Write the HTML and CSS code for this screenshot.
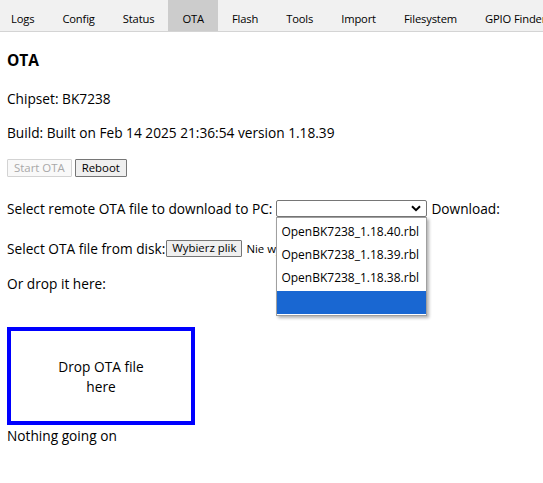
FILE: index.html
```html
<!DOCTYPE html>
<html lang="en">
<head>
<meta charset="utf-8">
<title>OTA</title>
<link rel="stylesheet" href="styles.css">
</head>
<body>
<nav class="tabs">
  <button class="tab">Logs</button>
  <button class="tab">Config</button>
  <button class="tab">Status</button>
  <button class="tab active">OTA</button>
  <button class="tab">Flash</button>
  <button class="tab">Tools</button>
  <button class="tab">Import</button>
  <button class="tab">Filesystem</button>
  <button class="tab">GPIO Finder</button>
</nav>
<main class="page">
  <h2 class="title">OTA</h2>
  <p class="line chipset">Chipset: BK7238</p>
  <p class="line build">Build: Built on Feb 14 2025 21:36:54 version 1.18.39</p>
  <div class="row actions">
    <button class="btn" disabled>Start OTA</button>
    <button class="btn">Reboot</button>
  </div>
  <div class="row remote">
    <span>Select remote OTA file to download to PC:</span>
    <span class="select-wrap">
      <span class="select">
        <svg class="chevron" width="10" height="7" viewBox="0 0 10 7"><polyline points="1,1.2 5,5.2 9,1.2" fill="none" stroke="#000" stroke-width="2"/></svg>
      </span>
      <span class="popup">
        <span class="option">OpenBK7238_1.18.40.rbl</span>
        <span class="option">OpenBK7238_1.18.39.rbl</span>
        <span class="option">OpenBK7238_1.18.38.rbl</span>
        <span class="option selected"></span>
      </span>
    </span>
    <span>Download:</span>
  </div>
  <div class="row disk">
    <span>Select OTA file from disk:</span><span class="btn file-btn">Wybierz plik</span><span class="file-name">Nie wybrano pliku</span>
  </div>
  <p class="line drop-label">Or drop it here:</p>
  <div class="drop">Drop OTA file<br>here</div>
  <p class="line status">Nothing going on</p>
</main>
</body>
</html>
```
FILE: styles.css
```css
html, body {
  margin: 0;
  padding: 0;
  background: #fff;
}
body {
  font-family: "Open Sans", "Noto Sans", sans-serif;
  font-size: 13.7px;
  color: #000;
}
.tabs {
  display: flex;
  background: #f1f1f1;
  border-bottom: 1px solid #d4d4d4;
  height: 31px;
  white-space: nowrap;
  overflow: hidden;
}
.tab {
  flex: none;
  border: 0;
  background: transparent;
  font-family: inherit;
  font-size: 11.2px;
  letter-spacing: -0.15px;
  color: #000;
  padding: 6px 14px 0;
  line-height: 25px;
  height: 31px;
  margin: 0;
}
.tab:first-child {
  padding-left: 11px;
}
.tab.active {
  background: #cccccc;
}
.page {
  padding: 0 7px;
}
.title {
  font-size: 15.5px;
  font-weight: bold;
  line-height: 20px;
  margin: 18px 0 0;
}
.line {
  margin: 0;
  line-height: 18px;
}
.chipset { margin-top: 20px; }
.build { margin-top: 16px; }
.row {
  display: flex;
  align-items: center;
  height: 18px;
  white-space: nowrap;
}
.actions {
  margin-top: 17px;
  gap: 3px;
}
.btn {
  font-family: inherit;
  font-size: 11.4px;
  line-height: 16px;
  height: 18px;
  box-sizing: border-box;
  padding: 0 6px;
  margin: 0;
  background: #efefef;
  border: 1px solid #767676;
  border-radius: 1px;
  color: #000;
}
.btn:disabled {
  background: #f9f9f9;
  border-color: #d3d3d3;
  color: #a8a8a8;
}
.remote {
  margin-top: 22px;
  gap: 4px;
}
.select-wrap {
  position: relative;
  display: block;
  width: 151px;
  height: 17px;
  margin-top: 1px;
}
.select {
  display: flex;
  justify-content: flex-end;
  align-items: center;
  box-sizing: border-box;
  width: 151px;
  height: 17px;
  border: 1px solid #767676;
  border-radius: 2px;
  background: #fff;
  padding-right: 5px;
}
.chevron {
  display: block;
}
.popup {
  position: absolute;
  left: 0;
  top: 17px;
  width: 151px;
  box-sizing: border-box;
  background: #fff;
  border: 1px solid #a0a0a0;
  padding: 4px 0 1px;
  box-shadow: 2px 2px 3px rgba(0, 0, 0, 0.3);
  z-index: 2;
}
.option {
  display: block;
  height: 23px;
  line-height: 19px;
  padding: 0 4px;
  font-size: 12px;
}
.option.selected {
  background: #1967d2;
}
.disk {
  margin-top: 22px;
}
.file-btn {
  display: inline-flex;
  align-items: center;
  height: 17px;
  margin-left: 1px;
  padding: 0 5px;
}
.file-name {
  margin-left: 4px;
  font-size: 11.4px;
}
.drop-label { margin-top: 18px; }
.drop {
  margin-top: 34px;
  width: 188px;
  height: 98px;
  box-sizing: border-box;
  border: 4px solid #0000ff;
  display: flex;
  align-items: center;
  justify-content: center;
  text-align: center;
  line-height: 20px;
  padding-top: 2px;
}
.status { margin-top: 2px; }
```
